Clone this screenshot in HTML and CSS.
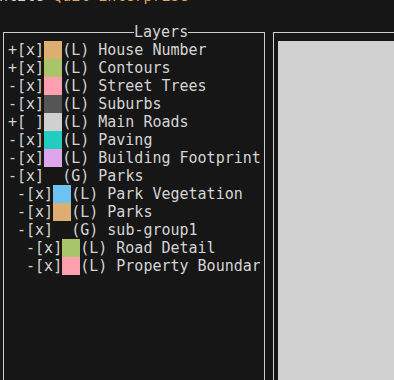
FILE: index.html
```html
<!DOCTYPE html>
<html lang="en">

<head>
    <meta charset="UTF-8">
    <meta name="viewport" content="width=device-width, initial-scale=1.0">
    <title>Layers</title>
    <link rel="stylesheet" href="styles.css">
</head>

<body>
    <div class="screen">
        <div class="menubar">ntile <span class="menu-key">Quit Enterprise</span></div>
        <div class="spacer"></div>

        <div class="panes">
            <fieldset class="layers">
                <legend>Layers</legend>
                <ul class="tree">
                    <li>+[x]<span class="swatch sw-tan"></span>(L) House Number</li>
                    <li>+[x]<span class="swatch sw-olive"></span>(L) Contours</li>
                    <li>-[x]<span class="swatch sw-pink"></span>(L) Street Trees</li>
                    <li>-[x]<span class="swatch sw-dark"></span>(L) Suburbs</li>
                    <li>+[ ]<span class="swatch sw-light"></span>(L) Main Roads</li>
                    <li>-[x]<span class="swatch sw-teal"></span>(L) Paving</li>
                    <li>-[x]<span class="swatch sw-lilac"></span>(L) Building Footprint</li>
                    <li>-[x]  (G) Parks</li>
                    <li> -[x]<span class="swatch sw-blue"></span>(L) Park Vegetation</li>
                    <li> -[x]<span class="swatch sw-tan"></span>(L) Parks</li>
                    <li> -[x]  (G) sub-group1</li>
                    <li>  -[x]<span class="swatch sw-olive"></span>(L) Road Detail</li>
                    <li>  -[x]<span class="swatch sw-pink"></span>(L) Property Boundar</li>
                </ul>
            </fieldset>

            <div class="map">
                <div class="canvas"></div>
            </div>
        </div>
    </div>
</body>

</html>
```

FILE: styles.css
```css
body {
    margin: 0;
    height: 380px;
    overflow: hidden;
    background-color: #161616;
    color: #d4d4d4;
    font-family: "DejaVu Sans Mono", monospace;
    font-size: 15px;
    line-height: 18px;
}

.screen {
    margin-top: -13px;
    margin-left: -1px;
}

.menubar {
    height: 18px;
    white-space: pre;
}

.menu-key {
    color: #dca45c;
}

.spacer {
    height: 18px;
}

.panes {
    display: flex;
    height: 420px;
}

.layers {
    box-sizing: border-box;
    width: 262px;
    min-width: 0;
    margin: 0 0 0 4px;
    padding: 0;
    border: 1px solid #cfcfcf;
}

.layers legend {
    padding: 0;
    margin-left: 130px;
}

.tree {
    list-style: none;
    margin: 0;
    padding: 0 4px;
    overflow: hidden;
}

.tree li {
    height: 18px;
    white-space: pre;
    overflow: hidden;
}

.swatch {
    display: inline-block;
    width: 18px;
    height: 18px;
    vertical-align: top;
}

.sw-tan {
    background-color: #dcae72;
}

.sw-olive {
    background-color: #a9c56b;
}

.sw-pink {
    background-color: #fd9fae;
}

.sw-dark {
    background-color: #555555;
}

.sw-light {
    background-color: #d0d0d0;
}

.sw-teal {
    background-color: #20cdbf;
}

.sw-lilac {
    background-color: #dea6ea;
}

.sw-blue {
    background-color: #6cc2f0;
}

.map {
    flex: 1;
    margin: 9px 0 0 8px;
    padding: 8px 0 0 4px;
    border-top: 1px solid #cfcfcf;
    border-left: 1px solid #cfcfcf;
}

.canvas {
    height: 100%;
    background-color: #d1d1d1;
}
```
